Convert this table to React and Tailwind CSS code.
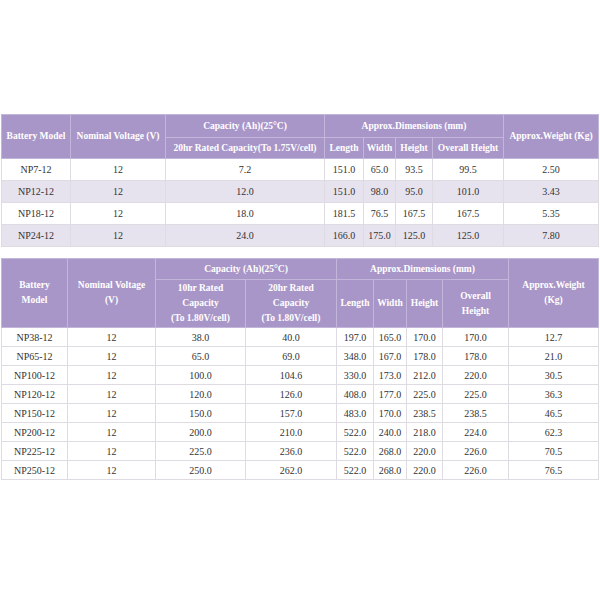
import React from "react";

const t1 = [
  ["NP7-12", "12", "7.2", "151.0", "65.0", "93.5", "99.5", "2.50"],
  ["NP12-12", "12", "12.0", "151.0", "98.0", "95.0", "101.0", "3.43"],
  ["NP18-12", "12", "18.0", "181.5", "76.5", "167.5", "167.5", "5.35"],
  ["NP24-12", "12", "24.0", "166.0", "175.0", "125.0", "125.0", "7.80"],
];

const t2 = [
  ["NP38-12", "12", "38.0", "40.0", "197.0", "165.0", "170.0", "170.0", "12.7"],
  ["NP65-12", "12", "65.0", "69.0", "348.0", "167.0", "178.0", "178.0", "21.0"],
  ["NP100-12", "12", "100.0", "104.6", "330.0", "173.0", "212.0", "220.0", "30.5"],
  ["NP120-12", "12", "120.0", "126.0", "408.0", "177.0", "225.0", "225.0", "36.3"],
  ["NP150-12", "12", "150.0", "157.0", "483.0", "170.0", "238.5", "238.5", "46.5"],
  ["NP200-12", "12", "200.0", "210.0", "522.0", "240.0", "218.0", "224.0", "62.3"],
  ["NP225-12", "12", "225.0", "236.0", "522.0", "268.0", "220.0", "226.0", "70.5"],
  ["NP250-12", "12", "250.0", "262.0", "522.0", "268.0", "220.0", "226.0", "76.5"],
];

const th = "bg-[#a996c8] text-white font-bold text-[9.5px] text-center align-middle border border-[#c2b6da] leading-[15px] p-0";
const td = "text-[#333] text-[10px] text-center align-middle border border-[#dedbe3] p-0";

export default function App() {
  return (
    <div className="w-[600px] h-[600px] bg-white pt-[114px] pl-[1px]" style={{ fontFamily: '"Liberation Serif", "Times New Roman", serif' }}>
      <table className="border-collapse table-fixed w-[597px]">
        <colgroup>
          <col className="w-[69px]" />
          <col className="w-[95px]" />
          <col className="w-[159px]" />
          <col className="w-[39px]" />
          <col className="w-[32px]" />
          <col className="w-[37px]" />
          <col className="w-[71px]" />
          <col className="w-[95px]" />
        </colgroup>
        <thead>
          <tr className="h-[23px]">
            <th rowSpan={2} className={th}>Battery Model</th>
            <th rowSpan={2} className={th}>Nominal Voltage (V)</th>
            <th className={th}>Capacity (Ah)(25°C)</th>
            <th colSpan={4} className={th}>Approx.Dimensions (mm)</th>
            <th rowSpan={2} className={th}>Approx.Weight (Kg)</th>
          </tr>
          <tr className="h-[21px]">
            <th className={th}>20hr Rated Capacity(To 1.75V/cell)</th>
            <th className={th}>Length</th>
            <th className={th}>Width</th>
            <th className={th}>Height</th>
            <th className={th}>Overall Height</th>
          </tr>
        </thead>
        <tbody>
          {t1.map((r, i) => (
            <tr key={i} className={"h-[22px] " + (i % 2 === 1 ? "bg-[#e6e2ee]" : "bg-white")}>
              {r.map((c, j) => (
                <td key={j} className={td}>{c}</td>
              ))}
            </tr>
          ))}
        </tbody>
      </table>

      <table className="border-collapse table-fixed w-[597px] mt-[11px]">
        <colgroup>
          <col className="w-[66px]" />
          <col className="w-[88px]" />
          <col className="w-[90px]" />
          <col className="w-[91px]" />
          <col className="w-[37px]" />
          <col className="w-[33px]" />
          <col className="w-[36px]" />
          <col className="w-[66px]" />
          <col className="w-[90px]" />
        </colgroup>
        <thead>
          <tr className="h-[21px]">
            <th rowSpan={2} className={th}>Battery<br />Model</th>
            <th rowSpan={2} className={th}>Nominal Voltage<br />(V)</th>
            <th colSpan={2} className={th}>Capacity (Ah)(25°C)</th>
            <th colSpan={4} className={th}>Approx.Dimensions (mm)</th>
            <th rowSpan={2} className={th}>Approx.Weight<br />(Kg)</th>
          </tr>
          <tr className="h-[48px]">
            <th className={th}>10hr Rated<br />Capacity<br />(To 1.80V/cell)</th>
            <th className={th}>20hr Rated<br />Capacity<br />(To 1.80V/cell)</th>
            <th className={th}>Length</th>
            <th className={th}>Width</th>
            <th className={th}>Height</th>
            <th className={th}>Overall<br />Height</th>
          </tr>
        </thead>
        <tbody>
          {t2.map((r, i) => (
            <tr key={i} className="h-[19px] bg-white">
              {r.map((c, j) => (
                <td key={j} className={td}>{c}</td>
              ))}
            </tr>
          ))}
        </tbody>
      </table>
    </div>
  );
}
